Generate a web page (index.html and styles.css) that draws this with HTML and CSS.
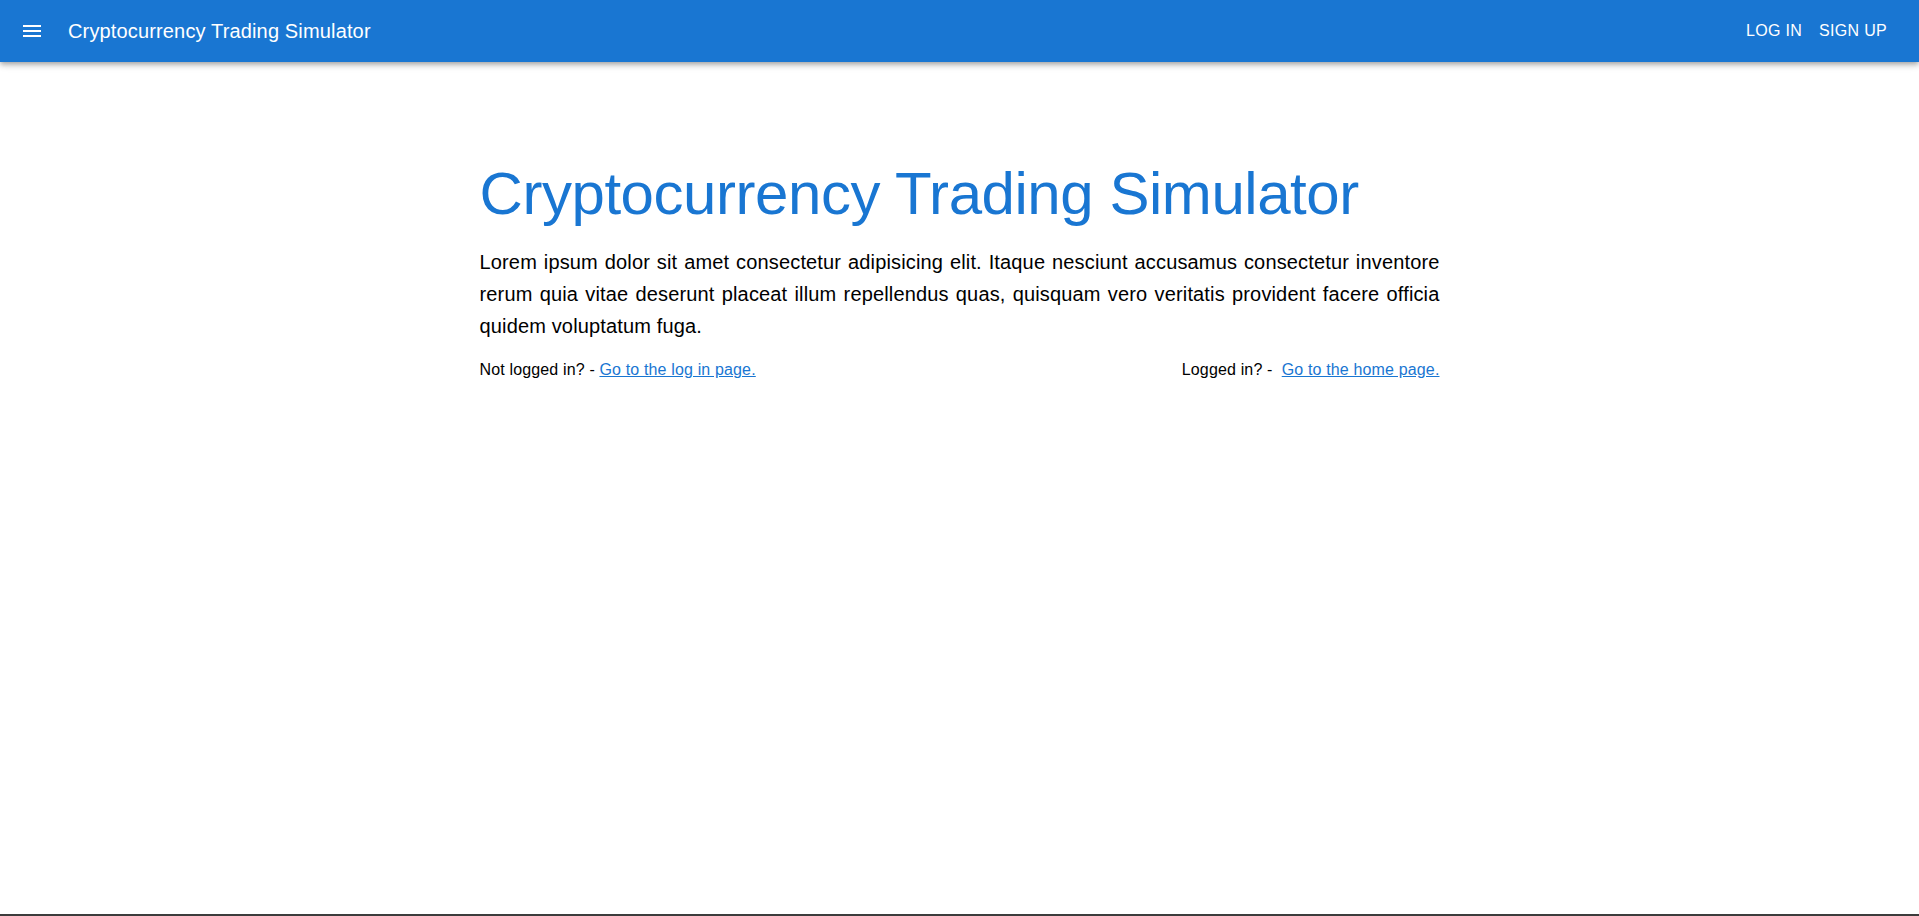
FILE: index.html
```html
<!DOCTYPE html>
<html lang="en">
<head>
<meta charset="utf-8">
<title>Cryptocurrency Trading Simulator</title>
<link rel="stylesheet" href="styles.css">
</head>
<body>
<div class="page">
  <header class="appbar">
    <div class="appbar-left">
      <button class="icon-btn" aria-label="menu">
        <svg viewBox="0 0 24 24" width="24" height="24"><path fill="#fff" d="M3 18h18v-2H3v2zm0-5h18v-2H3v2zm0-7v2h18V6H3z"/></svg>
      </button>
      <span class="brand">Cryptocurrency Trading Simulator</span>
    </div>
    <nav class="appbar-right">
      <a class="nav-btn" href="#">LOG IN</a>
      <a class="nav-btn" href="#">SIGN UP</a>
    </nav>
  </header>
  <main class="content">
    <h1 class="hero-title">Cryptocurrency Trading Simulator</h1>
    <p class="hero-text">Lorem ipsum dolor sit amet consectetur adipisicing elit. Itaque nesciunt accusamus consectetur inventore rerum quia vitae deserunt placeat illum repellendus quas, quisquam vero veritatis provident facere officia quidem voluptatum fuga.</p>
    <div class="links-row">
      <span>Not logged in? - <a class="link" href="#">Go to the log in page.</a></span>
      <span>Logged in? - &nbsp;<a class="link" href="#">Go to the home page.</a></span>
    </div>
  </main>
  <footer class="footer"></footer>
</div>
</body>
</html>
```
FILE: styles.css
```css
* { box-sizing: border-box; }
html, body { margin: 0; padding: 0; }
body {
  font-family: "Liberation Sans", Arial, sans-serif;
  color: #000;
  background: #fff;
}
.page {
  min-height: 100vh;
  display: flex;
  flex-direction: column;
}
.appbar {
  height: 62px;
  background: #1976d2;
  color: #fff;
  display: flex;
  align-items: center;
  justify-content: space-between;
  padding: 0 24px 0 20px;
  box-shadow: 0 2px 4px -1px rgba(0,0,0,0.2), 0 4px 5px 0 rgba(0,0,0,0.14), 0 1px 10px 0 rgba(0,0,0,0.12);
  position: relative;
  z-index: 2;
}
.appbar-left {
  display: flex;
  align-items: center;
  gap: 24px;
}
.icon-btn {
  background: none;
  border: 0;
  padding: 0;
  width: 24px;
  height: 24px;
  display: flex;
  cursor: pointer;
}
.brand {
  font-size: 20px;
  line-height: 24px;
  letter-spacing: 0.15px;
}
.appbar-right {
  display: flex;
  align-items: center;
  gap: 1px;
}
.nav-btn {
  color: #fff;
  text-decoration: none;
  font-size: 16px;
  line-height: 24px;
  letter-spacing: 0.3px;
  padding: 6px 8px;
}
.content {
  flex: 1;
  width: 960px;
  margin: 0 auto;
  padding-top: 96px;
}
.hero-title {
  margin: 0;
  font-size: 60px;
  line-height: 72px;
  font-weight: 400;
  letter-spacing: -0.45px;
  color: #1976d2;
}
.hero-text {
  margin: 16px 0 0;
  font-size: 20px;
  line-height: 32px;
  letter-spacing: 0.15px;
  text-align: justify;
}
.links-row {
  margin-top: 16px;
  display: flex;
  justify-content: space-between;
  font-size: 16px;
  line-height: 24px;
  letter-spacing: 0.15px;
}
.link {
  color: #1976d2;
  text-decoration: underline;
}
.footer {
  height: 2px;
  background: #3c3c3c;
}
```
